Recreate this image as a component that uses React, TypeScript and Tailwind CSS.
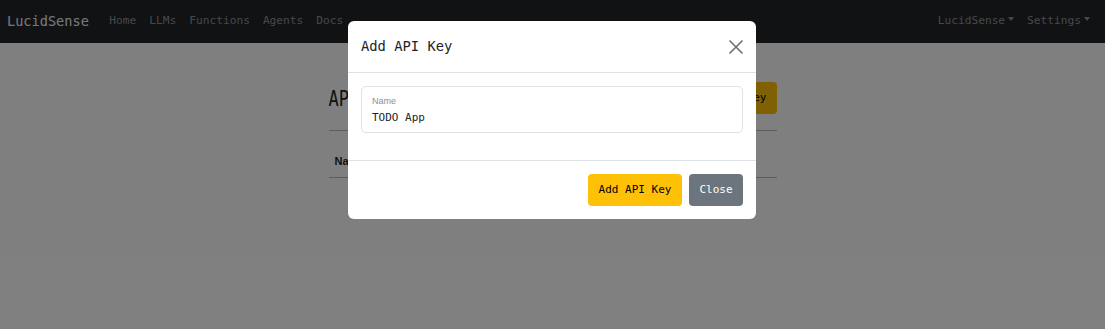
import React from "react";

const mono = { fontFamily: '"DejaVu Sans Mono", "Liberation Mono", monospace' };

function Caret() {
  return <span className="ml-[3px] inline-block h-0 w-0 border-x-[3.5px] border-t-[4px] border-x-transparent border-t-current align-middle relative -top-[2px]" />;
}

export default function App() {
  return (
    <div className="relative h-[329px] w-[1105px] overflow-hidden bg-white" style={mono}>
      <nav className="flex h-[43px] items-center bg-[#212529] pl-[7px] pr-[15px]">
        <span className="text-[13.6px] text-[#f2f2f2] mr-[14px]">LucidSense</span>
        <div className="flex items-center text-[11.2px] text-[#8f9193]">
          <span className="px-[6.5px]">Home</span>
          <span className="px-[6.5px]">LLMs</span>
          <span className="px-[6.5px]">Functions</span>
          <span className="px-[6.5px]">Agents</span>
          <span className="px-[6.5px]">Docs</span>
        </div>
        <div className="ml-auto flex items-center gap-[13px] text-[11.2px] text-[#8f9193]">
          <span>LucidSense<Caret /></span>
          <span>Settings<Caret /></span>
        </div>
      </nav>

      <div className="mx-auto w-[448px] pt-[39px]">
        <div className="flex items-center justify-between">
          <h1 className="text-[17px] leading-[32px] text-[#212529] scale-y-125 origin-left">API Keys</h1>
          <button className="h-[32px] rounded-[4px] bg-[#ffc107] px-[10px] text-[11px] text-black">Add API Key</button>
        </div>
        <div className="mt-[16px] h-px bg-[#bdbdbd]" />
        <div className="mt-[22px] border-b border-[#bdbdbd] pb-[8px] pl-[6px] text-[11px] leading-[16px] font-bold text-[#212529]" style={{ fontFamily: '"Liberation Sans", sans-serif' }}>
          Name
        </div>
      </div>

      <div className="absolute inset-0 bg-black/50" />

      <div className="absolute left-[348px] top-[21px] w-[408px] rounded-[6px] bg-white">
        <div className="flex h-[52px] items-center justify-between border-b border-[#dee2e6] px-[13px]">
          <span className="text-[13.8px] text-[#212529]">Add API Key</span>
          <svg width="16" height="16" viewBox="0 0 16 16" className="mr-[-1px]">
            <path d="M1.5 1.5 L14.5 14.5 M14.5 1.5 L1.5 14.5" stroke="#6c6e70" strokeWidth="1.6" fill="none" />
          </svg>
        </div>
        <div className="h-[88px] border-b border-[#dee2e6] px-[13px] pt-[13px]">
          <div className="h-[47px] rounded-[5px] border border-[#dee2e6] px-[10px] pt-[9px]">
            <div className="text-[9px] leading-[10px] text-[#8a8f96]" style={{ fontFamily: '"Liberation Sans", sans-serif' }}>Name</div>
            <div className="mt-[5px] text-[11px] leading-[14px] text-[#212529]">TODO App</div>
          </div>
        </div>
        <div className="flex justify-end gap-[7px] px-[13px] py-[13px]">
          <button className="h-[32px] w-[94px] rounded-[4px] bg-[#ffc107] text-[11px] text-black">Add API Key</button>
          <button className="h-[32px] w-[54px] rounded-[4px] bg-[#6c757d] text-[11px] text-white">Close</button>
        </div>
      </div>
    </div>
  );
}
